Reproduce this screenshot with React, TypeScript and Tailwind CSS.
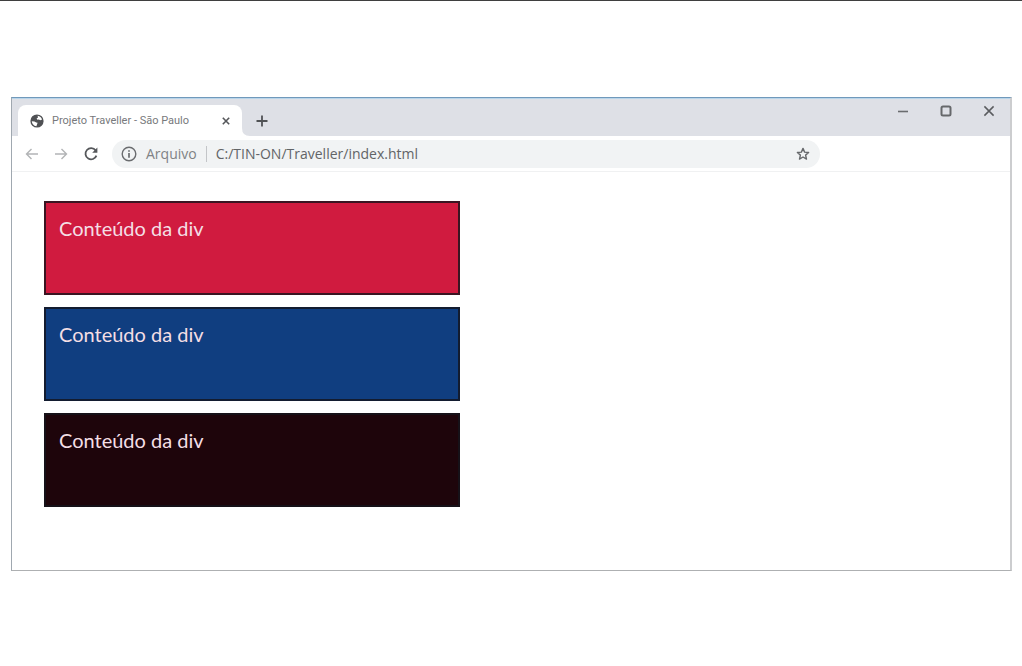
import React from "react";

const boxes = [
  { id: "red", color: "bg-[#d01b3f]" },
  { id: "blue", color: "bg-[#103e80]" },
  { id: "black", color: "bg-[#1e050b]" },
];

function GlobeIcon() {
  return (
    <svg viewBox="0 0 14 14" className="size-3.5 shrink-0" aria-hidden="true">
      <circle cx="7" cy="7" r="6.6" fill="#4f5154" />
      <path d="M7.6 1.8C9.8 2 11.6 3.6 12.1 5.6L10.4 6.2 8.8 5.4 7.4 5.8 6.6 4.6 8 3.4Z" fill="#fff" />
      <path d="M1.8 7.2 4.4 7.4 6.2 8.6 7.6 8.8 7 10.4 6.4 12.2C3.8 11.8 1.8 9.8 1.8 7.2Z" fill="#fff" />
    </svg>
  );
}

function TabStrip() {
  return (
    <header className="flex h-[38px] items-start border-t border-[#b9d5ea] bg-[#dee0e6] pl-1.5">
      <div className="mt-1.5 flex h-[31px] w-56 shrink-0 items-center rounded-t-lg bg-white pt-px pr-2.5 pl-3">
        <GlobeIcon />
        <span className="ml-2 flex-1 whitespace-nowrap font-[Roboto,sans-serif] text-[11px] text-[#77797c]">
          Projeto Traveller - São Paulo
        </span>
        <button aria-label="Fechar guia" className="flex size-3 items-center justify-center">
          <svg viewBox="0 0 8 8" className="size-2" fill="none" stroke="#55575a" strokeWidth="1.6">
            <path d="M.8.8 7.2 7.2M7.2.8.8 7.2" />
          </svg>
        </button>
      </div>
      <svg viewBox="0 0 8 8" className="size-2 shrink-0 self-end" aria-hidden="true">
        <path d="M0 0Q0 8 8 8H0Z" fill="#fff" />
      </svg>
      <button aria-label="Nova guia" className="mt-4 ml-1.5 flex size-3 items-center justify-center">
        <svg viewBox="0 0 12 12" className="size-3" fill="none" stroke="#505255" strokeWidth="1.8">
          <path d="M6 .5V11.5M.5 6H11.5" />
        </svg>
      </button>
      <div className="mt-1.5 mr-[15px] ml-auto flex gap-[31px]">
        <button aria-label="Minimizar" className="size-3">
          <svg viewBox="0 0 12 12" className="size-3" fill="none" stroke="#6a6c6f" strokeWidth="1.6">
            <path d="M1 6.5H11" />
          </svg>
        </button>
        <button aria-label="Maximizar" className="size-3">
          <svg viewBox="0 0 12 12" className="size-3" fill="none" stroke="#66686b" strokeWidth="2">
            <rect x="1.5" y="1.5" width="9" height="9" rx="1.5" />
          </svg>
        </button>
        <button aria-label="Fechar" className="size-3">
          <svg viewBox="0 0 12 12" className="size-3" fill="none" stroke="#5a5c5f" strokeWidth="1.5">
            <path d="M1.4 1.4 10.6 10.6M10.6 1.4 1.4 10.6" />
          </svg>
        </button>
      </div>
    </header>
  );
}

function Toolbar() {
  return (
    <nav className="flex h-9 items-center border-b border-[#f0f1f2] bg-white pt-px pr-[190px] pl-3">
      <button aria-label="Voltar" className="size-4">
        <svg viewBox="0 0 16 16" className="size-4" fill="none" stroke="#b2b4b6" strokeWidth="1.4">
          <path d="M14 8H2.5M7.5 3 2.5 8 7.5 13" />
        </svg>
      </button>
      <button aria-label="Avançar" className="ml-[13px] size-4">
        <svg viewBox="0 0 16 16" className="size-4" fill="none" stroke="#b2b4b6" strokeWidth="1.4">
          <path d="M2 8H13.5M8.5 3 13.5 8 8.5 13" />
        </svg>
      </button>
      <button aria-label="Recarregar" className="ml-3.5 size-4">
        <svg viewBox="0 0 16 16" className="size-4" fill="none">
          <path d="M12.6 4.4A5.6 5.6 0 1 0 13.4 9.6" stroke="#55575a" strokeWidth="1.8" />
          <path d="M14.4 1.6V6.8H9.2Z" fill="#55575a" />
        </svg>
      </button>
      <div className="ml-[13px] flex h-7 flex-1 items-center rounded-full bg-[#f1f3f4] pr-2.5 pl-[9px] text-sm">
        <svg viewBox="0 0 16 16" className="size-4 shrink-0" fill="none" stroke="#6a6c6f" strokeWidth="1.4" aria-hidden="true">
          <circle cx="8" cy="8" r="6.8" />
          <path d="M8 7V11.8M8 4.2V5.8" strokeWidth="1.7" />
        </svg>
        <label htmlFor="address" className="ml-[9px] text-[#808285]">
          Arquivo
        </label>
        <span className="ml-[9px] h-4 w-px bg-[#c3c5c8]" />
        <input
          id="address"
          type="text"
          defaultValue="C:/TIN-ON/Traveller/index.html"
          className="ml-[9px] min-w-0 flex-1 bg-transparent text-[#626467] outline-none"
        />
        <button aria-label="Adicionar aos favoritos" className="size-3.5">
          <svg viewBox="0 0 14 14" className="size-3.5" fill="none" stroke="#66686b" strokeWidth="1.4" strokeLinejoin="round">
            <path d="M7 1.4 8.6 5.1 12.6 5.5 9.6 8.1 10.5 12.1 7 10 3.5 12.1 4.4 8.1 1.4 5.5 5.4 5.1Z" />
          </svg>
        </button>
      </div>
    </nav>
  );
}

export default function App() {
  return (
    <div className="min-h-screen border-t border-[#3f3f3f] bg-white pt-24 pr-2.5 pb-24 pl-[11px] font-['Open_Sans',sans-serif]">
      <div className="border border-t-[#7099bb] border-r-2 border-r-[#cccdcf] border-b-[#aeb0b2] border-l-[#a0a8b0] bg-white">
        <TabStrip />
        <Toolbar />
        <main className="flex flex-col gap-3 px-8 pt-[29px] pb-[63px] font-['Lato',sans-serif]">
          {boxes.map((box) => (
            <div
              key={box.id}
              className={`h-[94px] w-[416px] max-w-full border-2 border-[#14141c]/80 px-[13px] py-[11px] text-xl text-[#f4dfe5] ${box.color}`}
            >
              Conteúdo da div
            </div>
          ))}
        </main>
      </div>
    </div>
  );
}
